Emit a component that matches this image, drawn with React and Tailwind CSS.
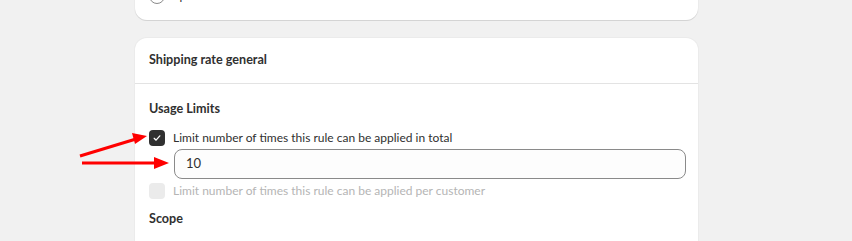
import React from 'react';

const Check = () => (
  <svg viewBox="0 0 16 16" className="w-[10px] h-[10px]" fill="none">
    <path d="M3.5 8.5l3 3 6-7" stroke="white" strokeWidth="2" strokeLinecap="round" strokeLinejoin="round" />
  </svg>
);

const Arrows = () => (
  <svg className="absolute left-0 top-0 pointer-events-none" width="852" height="241">
    <line x1="80" y1="156" x2="136" y2="139" stroke="#ff0000" strokeWidth="3" />
    <polygon points="147,136 132,133 135,144" fill="#ff0000" />
    <line x1="82" y1="163" x2="156" y2="163" stroke="#ff0000" strokeWidth="3" />
    <polygon points="169,163 154,157 154,169" fill="#ff0000" />
  </svg>
);

export default function App() {
  return (
    <div
      className="relative h-[241px] w-[852px] overflow-hidden bg-[#f1f1f1] text-[12px] text-[#303030]"
      style={{ fontFamily: 'Lato, "Noto Sans", sans-serif' }}
    >
      <div className="ml-[135px] w-[563px] h-[300px] flex flex-col gap-[18px] mt-[-30px]">
        <div className="bg-white rounded-[12px] shadow-[0_1px_0_0_#d4d4d4,0_0_0_1px_#ebebeb] px-[14px] pt-[16px] pb-[14px]">
          <div className="flex items-center gap-[8px] h-[20px]">
            <span className="w-[16px] h-[16px] rounded-full border border-[#8a8a8a]" />
            <span className="text-[#303030]">Specific</span>
          </div>
        </div>
        <div className="flex-1 bg-white rounded-t-[12px] shadow-[0_0_0_1px_#ebebeb] flex flex-col">
          <div className="h-[46px] px-[14px] flex items-center border-b border-[#e3e3e3] font-bold text-[12.6px]">
            Shipping rate general
          </div>
          <div className="px-[14px] pt-[15px] flex flex-col">
            <div className="font-bold h-[20px] leading-[20px] text-[12.6px]">Usage Limits</div>
            <label className="mt-[10px] flex items-center gap-[8px] h-[18px]">
              <span className="w-[16px] h-[16px] rounded-[4px] bg-[#303030] flex items-center justify-center">
                <Check />
              </span>
              <span>Limit number of times this rule can be applied in total</span>
            </label>
            <div className="ml-[25px] mr-[-2px] mt-[2px] h-[30px] rounded-[8px] border border-[#8a8a8a] bg-[#fdfdfd] flex items-center px-[11px] text-[13px]">
              10
            </div>
            <label className="mt-[3px] flex items-center gap-[8px] h-[18px] text-[#b5b5b5]">
              <span className="w-[16px] h-[16px] rounded-[4px] bg-[#ebebeb]" />
              <span>Limit number of times this rule can be applied per customer</span>
            </label>
            <div className="mt-[9px] font-bold h-[20px] leading-[20px] text-[12.6px]">Scope</div>
          </div>
        </div>
      </div>
      <Arrows />
    </div>
  );
}
